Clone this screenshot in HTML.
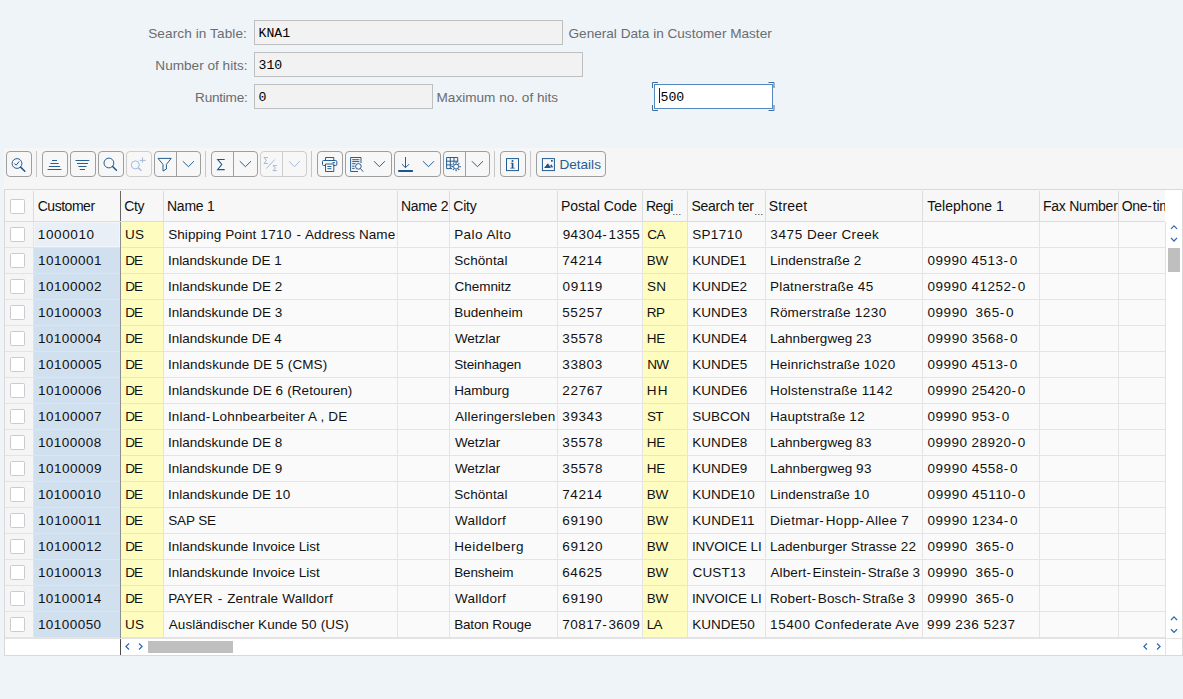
<!DOCTYPE html>
<html lang="en">
<head>
<meta charset="utf-8">
<title>Table Search</title>
<style>
html,body{margin:0;padding:0}
body{width:1183px;height:699px;overflow:hidden;background:#eff4f9;position:relative;font-family:"Liberation Sans",Arial,sans-serif;color:#1a1a1a}
.abs{position:absolute}
.lbl{position:absolute;font-size:13.6px;color:#6a6d70;white-space:nowrap;line-height:16px}
.lbl.r{text-align:right;width:200px}
.inp{position:absolute;box-sizing:border-box;border:1px solid #bfbfbf;background:#f2f2f2;height:25px;font-family:"Liberation Mono",monospace;font-size:13.2px;line-height:25px;padding-left:3.5px;color:#000;white-space:nowrap}
.inp.act{background:#fff;border-color:#5288bd}
.tb{position:absolute;left:4px;top:148px;width:1179px;height:42px;background:#f6f6f6}
.btn{position:absolute;top:151px;height:26px;box-sizing:border-box;border:1px solid #9e9e9e;border-radius:4px;background:#f7f7f7}
.btn.dis{border-color:#cdcdcd}
.btn svg{position:absolute;left:0;top:0}
.sep{position:absolute;top:151px;width:1px;height:26px;background:#c6c6c6}
.tbl{position:absolute;left:4px;top:189px;width:1179px;height:467px;box-sizing:border-box;border:1px solid #d9d9d9;background:#fff}
.hrow{position:absolute;left:0;top:190px;height:31px;width:1183px}
.hc{position:absolute;top:0;height:31px;background:#f7f7f7;border-right:1px solid #dcdcdc;font-size:14px;line-height:31px;white-space:nowrap;overflow:hidden;color:#111}
.hc .ht{position:absolute;left:3.5px;top:0.5px}
.hc b{font-weight:normal;padding:0 1.2px 0 0}
.hc.c-one{border-right:0;width:46px !important}
.hc .ell{position:absolute;top:17px;font-size:9px;line-height:10px;letter-spacing:0.5px}
.row{position:absolute;left:0;height:25px;width:1183px}
.c{position:absolute;top:0;height:25px;background:#fafafa;border-right:1px solid #e4e4e4;border-bottom:1px solid #e4e4e4;font-size:13.5px;line-height:25px;white-space:nowrap;overflow:hidden;color:#111}
.c span{position:absolute;left:4.5px;top:0;--ls:0px;letter-spacing:var(--ls)}
.c i{font-style:normal;letter-spacing:calc(var(--ls) + .3px)}
.c b{font-weight:normal;padding:0 1.6px 0 0}
.c b.s{padding:0 .8px}
.c.chk{background:#f5f5f5}
.cb{position:absolute;box-sizing:border-box;width:15px;height:15px;border:1px solid #cdc9d2;border-radius:1.5px;background:#fff}
.c.c-cust{background:#d1e0ef}
.c.c-cust.first{background:#e9eff7;box-shadow:inset 0 0 0 1px #f3f5f8}
.c.c-cty,.c.c-reg{background:#fffcc0}
</style>
</head>
<body>
<div class="lbl r" style="left:47px;top:26px;letter-spacing:.1px">Search in Table:</div>
<div class="inp" style="left:254px;top:20px;width:309px">KNA1</div>
<div class="lbl" style="left:568.5px;top:26px">General Data in Customer Master</div>
<div class="lbl r" style="left:47.5px;top:58px">Number of hits:</div>
<div class="inp" style="left:254px;top:52px;width:329px">310</div>
<div class="lbl r" style="left:47.5px;top:90px;letter-spacing:-.25px">Runtime:</div>
<div class="inp" style="left:254px;top:84px;width:179px">0</div>
<div class="lbl" style="left:436.5px;top:90px">Maximum no. of hits</div>
<div class="inp act" style="left:653.5px;top:84px;width:119.5px;padding-left:6px">500</div>
<div class="abs" style="left:659px;top:88px;width:1px;height:15px;background:#222"></div>
<svg class="abs" style="left:651px;top:81px" width="125" height="31" viewBox="0 0 125 31">
<path d="M1.5,7 V1.5 H7 M117.5,1.5 H123 V7 M123,24 V29.5 H117.5 M7,29.5 H1.5 V24" fill="none" stroke="#3f6f9f" stroke-width="1"/>
</svg>
<div class="tb"></div>
<!-- 1 detail -->
<div class="btn" style="left:6px;width:26px"><svg width="26" height="26" viewBox="0 0 26 26" style="left:-1px;top:-1px"><g fill="none" stroke="#1b558e"><circle cx="11" cy="12.5" r="4.9" stroke-width="0.95"/><path d="M8.3,12.4 L10.1,14.2 L13.3,10.4" stroke-width="1"/><path d="M14.6,16.1 L18.8,20.3" stroke-width="1.5" stroke-linecap="round"/></g></svg></div>
<div class="sep" style="left:36px"></div>
<!-- 2 sort asc -->
<div class="btn" style="left:42px;width:26px"><svg width="26" height="26" viewBox="0 0 26 26" style="left:-1px;top:-1px"><g stroke="#1b558e" stroke-width="0.95"><path d="M10,9.5 H15 M8.4,12.5 H16.6 M6.9,15.5 H18.1 M5.6,18.5 H19.4"/></g></svg></div>
<!-- 3 sort desc -->
<div class="btn" style="left:70px;width:26px"><svg width="26" height="26" viewBox="0 0 26 26" style="left:-1px;top:-1px"><g stroke="#1b558e" stroke-width="0.95"><path d="M5.5,9.5 H19.3 M7.1,12.5 H18 M8.3,15.5 H16.6 M9.8,18.5 H15"/></g></svg></div>
<!-- 4 find -->
<div class="btn" style="left:98px;width:26px"><svg width="26" height="26" viewBox="0 0 26 26" style="left:-1px;top:-1px"><g fill="none" stroke="#1b558e"><circle cx="10.9" cy="12" r="4.9" stroke-width="0.95"/><path d="M14.6,15.5 L18.4,19.3" stroke-width="1.5" stroke-linecap="round"/></g></svg></div>
<!-- 5 find next disabled -->
<div class="btn dis" style="left:126px;width:26px"><svg width="26" height="26" viewBox="0 0 26 26" style="left:-1px;top:-1px"><g fill="none" stroke="#a0bbdc"><circle cx="9.3" cy="13.9" r="4" stroke-width="1"/><path d="M12.2,16.8 L15.5,19.7" stroke-width="1.3"/><path d="M16.5,6.3 V11.7 M13.6,9.4 H19.6" stroke-width="1"/></g></svg></div>
<!-- 6 filter split -->
<div class="btn" style="left:154px;width:47px"><svg width="47" height="26" viewBox="0 0 47 26" style="left:-1px;top:-1px"><path d="M22.5,0 V26" stroke="#9e9e9e" stroke-width="1"/><g fill="none" stroke="#1b558e"><path d="M4,7.4 H17.2 L12.4,13.4 V18 L9,20 V13.4 Z" stroke-width="0.95" stroke-linejoin="round"/><path d="M28.8,10.2 L34.4,15.7 L40,10.2" stroke-width="0.95"/></g></svg></div>
<div class="sep" style="left:205px"></div>
<!-- 7 sum split -->
<div class="btn" style="left:211px;width:47px"><svg width="47" height="26" viewBox="0 0 47 26" style="left:-1px;top:-1px"><path d="M22.5,0 V26" stroke="#9e9e9e" stroke-width="1"/><g fill="none" stroke="#1b558e"><path d="M13.7,8.4 H6.6 L10.8,13.5 L6.6,18.6 H13.7" stroke-width="1.05"/><path d="M28.8,10.2 L34.4,15.7 L40,10.2" stroke-width="0.95"/></g></svg></div>
<!-- 8 subtotal disabled -->
<div class="btn dis" style="left:260px;width:47px"><svg width="47" height="26" viewBox="0 0 47 26" style="left:-1px;top:-1px"><path d="M22.5,0 V26" stroke="#cdcdcd" stroke-width="1"/><g fill="none" stroke="#a0bbdc" stroke-width="1"><path d="M7.9,6.5 H4 L6.4,9.5 L4,12.5 H7.9"/><path d="M14.7,8.6 L6.3,17.6"/><path d="M16.9,14.6 H13 L15.4,17.1 L13,19.6 H16.9"/><path d="M29,10.2 L34.4,15.7 L39.8,10.2"/></g></svg></div>
<div class="sep" style="left:311px"></div>
<!-- 9 print -->
<div class="btn" style="left:317px;width:26px"><svg width="26" height="26" viewBox="0 0 26 26" style="left:-1px;top:-1px"><g fill="none" stroke="#1b558e" stroke-width="0.95"><path d="M8.5,9.5 V6.5 H16.8 V9.5"/><path d="M8.5,14.5 H6.6 Q5.5,14.5 5.5,13.4 V10.6 Q5.5,9.5 6.6,9.5 H18.7 Q19.8,9.5 19.8,10.6 V13.4 Q19.8,14.5 18.7,14.5 H16.8"/><path d="M8.5,13 H16.8 V20.5 H8.5 Z"/><path d="M10.4,15.5 H14.4 M10.4,17.7 H14.4 M15.5,11.6 H17.9"/></g></svg></div>
<!-- 10 views -->
<div class="btn" style="left:345px;width:47px"><svg width="47" height="26" viewBox="0 0 47 26" style="left:-1px;top:-1px"><g fill="none" stroke="#1b558e" stroke-width="0.95"><path d="M13,20.5 H5.6 V6.5 H16 V12"/><path d="M7.2,8.7 H14.4 M7.2,10.6 H14.4 M7.2,12.7 H10.5 M7.2,15.2 H9.6 M7.2,17.4 H9.6"/><circle cx="13.4" cy="15.4" r="2.8"/><path d="M15.5,17.6 L18.2,20.7"/><path d="M29,10.2 L34.4,15.7 L39.9,10.2"/></g></svg></div>
<!-- 11 export -->
<div class="btn" style="left:394px;width:47px"><svg width="47" height="26" viewBox="0 0 47 26" style="left:-1px;top:-1px"><g fill="none" stroke="#1b558e" stroke-width="0.95"><path d="M11.5,6 V16.7 M7.9,13.1 L11.5,16.7 L15.1,13.1"/><path d="M4.2,20 H18.9" stroke-width="2"/><path d="M28.9,10.2 L34.5,15.7 L40,10.2"/></g></svg></div>
<!-- 12 layout split -->
<div class="btn" style="left:443px;width:47px"><svg width="47" height="26" viewBox="0 0 47 26" style="left:-1px;top:-1px"><path d="M22.5,0 V26" stroke="#9e9e9e" stroke-width="1"/><g fill="none" stroke="#1b558e" stroke-width="0.95"><path d="M9,17.6 H3.6 V6.5 H14.7 V11.5 M3.6,10.2 H14.7 M3.6,13.9 H9.5 M7.3,6.5 V17.6 M11,6.5 V11.8"/><circle cx="13.1" cy="15.6" r="2.5"/><path d="M13.1,11 V12.4 M13.1,18.8 V20.2 M8.5,15.6 H9.9 M16.3,15.6 H17.7 M9.9,12.4 L10.9,13.4 M15.3,17.8 L16.3,18.8 M16.3,12.4 L15.3,13.4 M10.9,17.8 L9.9,18.8" stroke-width="1.15"/><path d="M28.9,10.2 L34.4,15.7 L40,10.2"/></g></svg></div>
<div class="sep" style="left:494px"></div>
<!-- 13 info -->
<div class="btn" style="left:500px;width:26px"><svg width="26" height="26" viewBox="0 0 26 26" style="left:-1px;top:-1px"><rect x="6.5" y="7.6" width="12" height="12" fill="none" stroke="#1b558e" stroke-width="0.95"/><g fill="#1b558e"><circle cx="12.5" cy="9.9" r="1"/><path d="M10.7,11.7 H13.4 V16.7 H14.7 V17.6 H10.3 V16.7 H11.7 V12.6 H10.7 Z"/></g></svg></div>
<div class="sep" style="left:530px"></div>
<!-- 14 details -->
<div class="btn" style="left:536px;width:70px"><svg width="70" height="26" viewBox="0 0 70 26" style="left:-1px;top:-1px"><rect x="6.4" y="7.6" width="12" height="12" fill="none" stroke="#1b558e" stroke-width="0.95"/><g fill="#1b558e"><path d="M8,17 L11.9,12.2 L15,17 Z"/><path d="M14,15 L15.3,13.2 L17.2,16.2 L15.6,16.6 Z"/><rect x="15" y="9" width="1.7" height="1.7"/></g><text x="23.4" y="17.7" font-family="Liberation Sans, Arial, sans-serif" font-size="13.6" fill="#295c90">Details</text></svg></div>
<div class="tbl"></div>
<div class="hrow">
<div class="hc hchk" style="left:5px;width:28px"><span class="cb" style="left:5px;top:9px"></span></div>
<div class="hc c-cust" style="left:34px;width:86px"><span class="ht" style="left:3.67px;letter-spacing:-0.461px">Customer</span></div>
<div class="hc c-cty" style="left:121px;width:42px"><span class="ht" style="left:3.13px;letter-spacing:-0.298px">Cty</span></div>
<div class="hc c-n1" style="left:164px;width:233px"><span class="ht" style="left:2.97px;letter-spacing:-0.220px">Name 1</span></div>
<div class="hc c-n2" style="left:398px;width:51px"><span class="ht" style="left:2.97px;letter-spacing:-0.310px">Name 2</span></div>
<div class="hc c-city" style="left:450px;width:107px"><span class="ht" style="left:3.33px;letter-spacing:-0.271px">City</span></div>
<div class="hc c-pc" style="left:558px;width:84px"><span class="ht" style="left:2.97px;letter-spacing:-0.011px">Postal Code</span></div>
<div class="hc c-reg" style="left:643px;width:44px"><span class="ht" style="left:2.97px;letter-spacing:-0.477px">Regi</span><span class="ell" style="left:29.6px">...</span></div>
<div class="hc c-st" style="left:688px;width:77px"><span class="ht" style="left:3.38px;letter-spacing:-0.229px">Search ter</span><span class="ell" style="left:66.5px">...</span></div>
<div class="hc c-str" style="left:766px;width:156px"><span class="ht" style="left:2.82px;letter-spacing:0.198px">Street</span></div>
<div class="hc c-tel" style="left:923px;width:116px"><span class="ht" style="left:4.17px;letter-spacing:0.046px">Telephone 1</span></div>
<div class="hc c-fax" style="left:1040px;width:78px"><span class="ht" style="left:2.95px;letter-spacing:-0.236px">Fax Number</span></div>
<div class="hc c-one" style="left:1119px;width:46px"><span class="ht" style="left:2.7px;letter-spacing:-0.3px">One<b>-</b>tim</span></div>
</div>
<div class="row" style="top:222px">
<div class="c chk" style="left:5px;width:28px"><span class="cb" style="left:5px;top:5px"></span></div>
<div class="c c-cust first" style="left:34px;width:86px"><span style="left:3.85px;--ls:0.318px"><i>1000010</i></span></div>
<div class="c c-cty" style="left:121px;width:42px"><span style="left:4.03px;--ls:0.211px">US</span></div>
<div class="c c-n1" style="left:164px;width:233px"><span style="left:4.16px;--ls:0.086px">Shipping Point <i>1710</i> <b class="s">-</b> Address Name</span></div>
<div class="c c-n2" style="left:398px;width:51px"><span></span></div>
<div class="c c-city" style="left:450px;width:107px"><span style="left:4.17px;--ls:0.445px">Palo Alto</span></div>
<div class="c c-pc" style="left:558px;width:84px"><span style="left:4.69px;--ls:0.120px"><i>94304</i><b>-</b><i>1355</i></span></div>
<div class="c c-reg" style="left:643px;width:44px"><span style="left:4.18px;--ls:-0.314px">CA</span></div>
<div class="c c-st" style="left:688px;width:77px"><span style="left:4.16px;--ls:0.232px">SP<i>1710</i></span></div>
<div class="c c-str" style="left:766px;width:156px"><span style="left:4.32px;--ls:0.320px"><i>3475</i> Deer Creek</span></div>
<div class="c c-tel" style="left:923px;width:116px"><span></span></div>
<div class="c c-fax" style="left:1040px;width:78px"><span></span></div>
<div class="c c-one" style="left:1119px;width:46px"><span></span></div>
</div>
<div class="row" style="top:248px">
<div class="c chk" style="left:5px;width:28px"><span class="cb" style="left:5px;top:5px"></span></div>
<div class="c c-cust" style="left:34px;width:86px"><span style="left:3.88px;--ls:0.194px"><i>10100001</i></span></div>
<div class="c c-cty" style="left:121px;width:42px"><span style="left:4.26px;--ls:-1.116px">DE</span></div>
<div class="c c-n1" style="left:164px;width:233px"><span style="left:3.92px;--ls:-0.019px">Inlandskunde DE <i>1</i></span></div>
<div class="c c-n2" style="left:398px;width:51px"><span></span></div>
<div class="c c-city" style="left:450px;width:107px"><span style="left:4.16px;--ls:0.110px">Schöntal</span></div>
<div class="c c-pc" style="left:558px;width:84px"><span style="left:4.32px;--ls:0.247px"><i>74214</i></span></div>
<div class="c c-reg" style="left:643px;width:44px"><span style="left:3.86px;--ls:-0.385px">BW</span></div>
<div class="c c-st" style="left:688px;width:77px"><span style="left:4.14px;--ls:-0.076px">KUNDE<i>1</i></span></div>
<div class="c c-str" style="left:766px;width:156px"><span style="left:3.96px;--ls:0.094px">Lindenstraße <i>2</i></span></div>
<div class="c c-tel" style="left:923px;width:116px"><span style="left:4.58px;--ls:0.178px"><i>09990</i> <i>4513</i><b>-</b><i>0</i></span></div>
<div class="c c-fax" style="left:1040px;width:78px"><span></span></div>
<div class="c c-one" style="left:1119px;width:46px"><span></span></div>
</div>
<div class="row" style="top:274px">
<div class="c chk" style="left:5px;width:28px"><span class="cb" style="left:5px;top:5px"></span></div>
<div class="c c-cust" style="left:34px;width:86px"><span style="left:3.88px;--ls:0.207px"><i>10100002</i></span></div>
<div class="c c-cty" style="left:121px;width:42px"><span style="left:4.26px;--ls:-1.116px">DE</span></div>
<div class="c c-n1" style="left:164px;width:233px"><span style="left:3.92px;--ls:0.013px">Inlandskunde DE <i>2</i></span></div>
<div class="c c-n2" style="left:398px;width:51px"><span></span></div>
<div class="c c-city" style="left:450px;width:107px"><span style="left:4.55px;--ls:-0.039px">Chemnitz</span></div>
<div class="c c-pc" style="left:558px;width:84px"><span style="left:4.56px;--ls:0.507px"><i>09119</i></span></div>
<div class="c c-reg" style="left:643px;width:44px"><span style="left:3.96px;--ls:0.369px">SN</span></div>
<div class="c c-st" style="left:688px;width:77px"><span style="left:4.14px;--ls:0.018px">KUNDE<i>2</i></span></div>
<div class="c c-str" style="left:766px;width:156px"><span style="left:3.96px;--ls:0.210px">Platnerstraße <i>45</i></span></div>
<div class="c c-tel" style="left:923px;width:116px"><span style="left:4.58px;--ls:0.187px"><i>09990</i> <i>41252</i><b>-</b><i>0</i></span></div>
<div class="c c-fax" style="left:1040px;width:78px"><span></span></div>
<div class="c c-one" style="left:1119px;width:46px"><span></span></div>
</div>
<div class="row" style="top:300px">
<div class="c chk" style="left:5px;width:28px"><span class="cb" style="left:5px;top:5px"></span></div>
<div class="c c-cust" style="left:34px;width:86px"><span style="left:3.88px;--ls:0.206px"><i>10100003</i></span></div>
<div class="c c-cty" style="left:121px;width:42px"><span style="left:4.26px;--ls:-1.116px">DE</span></div>
<div class="c c-n1" style="left:164px;width:233px"><span style="left:3.92px;--ls:0.020px">Inlandskunde DE <i>3</i></span></div>
<div class="c c-n2" style="left:398px;width:51px"><span></span></div>
<div class="c c-city" style="left:450px;width:107px"><span style="left:4.17px;--ls:0.029px">Budenheim</span></div>
<div class="c c-pc" style="left:558px;width:84px"><span style="left:4.16px;--ls:0.400px"><i>55257</i></span></div>
<div class="c c-reg" style="left:643px;width:44px"><span style="left:3.86px;--ls:-0.604px">RP</span></div>
<div class="c c-st" style="left:688px;width:77px"><span style="left:4.14px;--ls:0.076px">KUNDE<i>3</i></span></div>
<div class="c c-str" style="left:766px;width:156px"><span style="left:3.96px;--ls:0.185px">Römerstraße <i>1230</i></span></div>
<div class="c c-tel" style="left:923px;width:116px"><span style="left:4.58px;--ls:0.209px"><i>09990</i>  <i>365</i><b>-</b><i>0</i></span></div>
<div class="c c-fax" style="left:1040px;width:78px"><span></span></div>
<div class="c c-one" style="left:1119px;width:46px"><span></span></div>
</div>
<div class="row" style="top:326px">
<div class="c chk" style="left:5px;width:28px"><span class="cb" style="left:5px;top:5px"></span></div>
<div class="c c-cust" style="left:34px;width:86px"><span style="left:3.88px;--ls:0.169px"><i>10100004</i></span></div>
<div class="c c-cty" style="left:121px;width:42px"><span style="left:4.26px;--ls:-1.116px">DE</span></div>
<div class="c c-n1" style="left:164px;width:233px"><span style="left:3.92px;--ls:-0.008px">Inlandskunde DE <i>4</i></span></div>
<div class="c c-n2" style="left:398px;width:51px"><span></span></div>
<div class="c c-city" style="left:450px;width:107px"><span style="left:4.93px;--ls:-0.047px">Wetzlar</span></div>
<div class="c c-pc" style="left:558px;width:84px"><span style="left:4.32px;--ls:0.348px"><i>35578</i></span></div>
<div class="c c-reg" style="left:643px;width:44px"><span style="left:3.86px;--ls:-0.428px">HE</span></div>
<div class="c c-st" style="left:688px;width:77px"><span style="left:4.14px;--ls:0.016px">KUNDE<i>4</i></span></div>
<div class="c c-str" style="left:766px;width:156px"><span style="left:3.96px;--ls:0.047px">Lahnbergweg <i>23</i></span></div>
<div class="c c-tel" style="left:923px;width:116px"><span style="left:4.58px;--ls:0.208px"><i>09990</i> <i>3568</i><b>-</b><i>0</i></span></div>
<div class="c c-fax" style="left:1040px;width:78px"><span></span></div>
<div class="c c-one" style="left:1119px;width:46px"><span></span></div>
</div>
<div class="row" style="top:352px">
<div class="c chk" style="left:5px;width:28px"><span class="cb" style="left:5px;top:5px"></span></div>
<div class="c c-cust" style="left:34px;width:86px"><span style="left:3.88px;--ls:0.201px"><i>10100005</i></span></div>
<div class="c c-cty" style="left:121px;width:42px"><span style="left:4.26px;--ls:-1.116px">DE</span></div>
<div class="c c-n1" style="left:164px;width:233px"><span style="left:3.92px;--ls:0.099px">Inlandskunde DE <i>5</i> (CMS)</span></div>
<div class="c c-n2" style="left:398px;width:51px"><span></span></div>
<div class="c c-city" style="left:450px;width:107px"><span style="left:4.16px;--ls:-0.121px">Steinhagen</span></div>
<div class="c c-pc" style="left:558px;width:84px"><span style="left:4.32px;--ls:0.271px"><i>33803</i></span></div>
<div class="c c-reg" style="left:643px;width:44px"><span style="left:4.13px;--ls:-0.507px">NW</span></div>
<div class="c c-st" style="left:688px;width:77px"><span style="left:4.14px;--ls:0.061px">KUNDE<i>5</i></span></div>
<div class="c c-str" style="left:766px;width:156px"><span style="left:3.96px;--ls:0.154px">Heinrichstraße <i>1020</i></span></div>
<div class="c c-tel" style="left:923px;width:116px"><span style="left:4.58px;--ls:0.178px"><i>09990</i> <i>4513</i><b>-</b><i>0</i></span></div>
<div class="c c-fax" style="left:1040px;width:78px"><span></span></div>
<div class="c c-one" style="left:1119px;width:46px"><span></span></div>
</div>
<div class="row" style="top:378px">
<div class="c chk" style="left:5px;width:28px"><span class="cb" style="left:5px;top:5px"></span></div>
<div class="c c-cust" style="left:34px;width:86px"><span style="left:3.88px;--ls:0.214px"><i>10100006</i></span></div>
<div class="c c-cty" style="left:121px;width:42px"><span style="left:4.26px;--ls:-1.116px">DE</span></div>
<div class="c c-n1" style="left:164px;width:233px"><span style="left:3.92px;--ls:0.065px">Inlandskunde DE <i>6</i> (Retouren)</span></div>
<div class="c c-n2" style="left:398px;width:51px"><span></span></div>
<div class="c c-city" style="left:450px;width:107px"><span style="left:4.17px;--ls:-0.078px">Hamburg</span></div>
<div class="c c-pc" style="left:558px;width:84px"><span style="left:4.32px;--ls:0.358px"><i>22767</i></span></div>
<div class="c c-reg" style="left:643px;width:44px"><span style="left:3.86px;--ls:1.037px">HH</span></div>
<div class="c c-st" style="left:688px;width:77px"><span style="left:4.14px;--ls:0.090px">KUNDE<i>6</i></span></div>
<div class="c c-str" style="left:766px;width:156px"><span style="left:3.96px;--ls:0.279px">Holstenstraße <i>1142</i></span></div>
<div class="c c-tel" style="left:923px;width:116px"><span style="left:4.58px;--ls:0.187px"><i>09990</i> <i>25420</i><b>-</b><i>0</i></span></div>
<div class="c c-fax" style="left:1040px;width:78px"><span></span></div>
<div class="c c-one" style="left:1119px;width:46px"><span></span></div>
</div>
<div class="row" style="top:404px">
<div class="c chk" style="left:5px;width:28px"><span class="cb" style="left:5px;top:5px"></span></div>
<div class="c c-cust" style="left:34px;width:86px"><span style="left:3.88px;--ls:0.207px"><i>10100007</i></span></div>
<div class="c c-cty" style="left:121px;width:42px"><span style="left:4.26px;--ls:-1.116px">DE</span></div>
<div class="c c-n1" style="left:164px;width:233px"><span style="left:3.92px;--ls:0.158px">Inland<b>-</b>Lohnbearbeiter A , DE</span></div>
<div class="c c-n2" style="left:398px;width:51px"><span></span></div>
<div class="c c-city" style="left:450px;width:107px"><span style="left:5.03px;--ls:0.226px">Alleringersleben</span></div>
<div class="c c-pc" style="left:558px;width:84px"><span style="left:4.32px;--ls:0.271px"><i>39343</i></span></div>
<div class="c c-reg" style="left:643px;width:44px"><span style="left:3.95px;--ls:-0.592px">ST</span></div>
<div class="c c-st" style="left:688px;width:77px"><span style="left:4.16px;--ls:0.025px">SUBCON</span></div>
<div class="c c-str" style="left:766px;width:156px"><span style="left:3.96px;--ls:0.114px">Hauptstraße <i>12</i></span></div>
<div class="c c-tel" style="left:923px;width:116px"><span style="left:4.58px;--ls:0.186px"><i>09990</i> <i>953</i><b>-</b><i>0</i></span></div>
<div class="c c-fax" style="left:1040px;width:78px"><span></span></div>
<div class="c c-one" style="left:1119px;width:46px"><span></span></div>
</div>
<div class="row" style="top:430px">
<div class="c chk" style="left:5px;width:28px"><span class="cb" style="left:5px;top:5px"></span></div>
<div class="c c-cust" style="left:34px;width:86px"><span style="left:3.88px;--ls:0.158px"><i>10100008</i></span></div>
<div class="c c-cty" style="left:121px;width:42px"><span style="left:4.26px;--ls:-1.116px">DE</span></div>
<div class="c c-n1" style="left:164px;width:233px"><span style="left:3.92px;--ls:0.015px">Inlandskunde DE <i>8</i></span></div>
<div class="c c-n2" style="left:398px;width:51px"><span></span></div>
<div class="c c-city" style="left:450px;width:107px"><span style="left:4.93px;--ls:-0.047px">Wetzlar</span></div>
<div class="c c-pc" style="left:558px;width:84px"><span style="left:4.32px;--ls:0.348px"><i>35578</i></span></div>
<div class="c c-reg" style="left:643px;width:44px"><span style="left:3.86px;--ls:-0.428px">HE</span></div>
<div class="c c-st" style="left:688px;width:77px"><span style="left:4.14px;--ls:0.091px">KUNDE<i>8</i></span></div>
<div class="c c-str" style="left:766px;width:156px"><span style="left:3.96px;--ls:0.047px">Lahnbergweg <i>83</i></span></div>
<div class="c c-tel" style="left:923px;width:116px"><span style="left:4.58px;--ls:0.187px"><i>09990</i> <i>28920</i><b>-</b><i>0</i></span></div>
<div class="c c-fax" style="left:1040px;width:78px"><span></span></div>
<div class="c c-one" style="left:1119px;width:46px"><span></span></div>
</div>
<div class="row" style="top:456px">
<div class="c chk" style="left:5px;width:28px"><span class="cb" style="left:5px;top:5px"></span></div>
<div class="c c-cust" style="left:34px;width:86px"><span style="left:3.88px;--ls:0.213px"><i>10100009</i></span></div>
<div class="c c-cty" style="left:121px;width:42px"><span style="left:4.26px;--ls:-1.116px">DE</span></div>
<div class="c c-n1" style="left:164px;width:233px"><span style="left:3.92px;--ls:0.021px">Inlandskunde DE <i>9</i></span></div>
<div class="c c-n2" style="left:398px;width:51px"><span></span></div>
<div class="c c-city" style="left:450px;width:107px"><span style="left:4.93px;--ls:-0.047px">Wetzlar</span></div>
<div class="c c-pc" style="left:558px;width:84px"><span style="left:4.32px;--ls:0.348px"><i>35578</i></span></div>
<div class="c c-reg" style="left:643px;width:44px"><span style="left:3.86px;--ls:-0.428px">HE</span></div>
<div class="c c-st" style="left:688px;width:77px"><span style="left:4.14px;--ls:0.069px">KUNDE<i>9</i></span></div>
<div class="c c-str" style="left:766px;width:156px"><span style="left:3.96px;--ls:0.047px">Lahnbergweg <i>93</i></span></div>
<div class="c c-tel" style="left:923px;width:116px"><span style="left:4.58px;--ls:0.208px"><i>09990</i> <i>4558</i><b>-</b><i>0</i></span></div>
<div class="c c-fax" style="left:1040px;width:78px"><span></span></div>
<div class="c c-one" style="left:1119px;width:46px"><span></span></div>
</div>
<div class="row" style="top:482px">
<div class="c chk" style="left:5px;width:28px"><span class="cb" style="left:5px;top:5px"></span></div>
<div class="c c-cust" style="left:34px;width:86px"><span style="left:3.88px;--ls:0.154px"><i>10100010</i></span></div>
<div class="c c-cty" style="left:121px;width:42px"><span style="left:4.26px;--ls:-1.116px">DE</span></div>
<div class="c c-n1" style="left:164px;width:233px"><span style="left:3.92px;--ls:0.024px">Inlandskunde DE <i>10</i></span></div>
<div class="c c-n2" style="left:398px;width:51px"><span></span></div>
<div class="c c-city" style="left:450px;width:107px"><span style="left:4.16px;--ls:0.110px">Schöntal</span></div>
<div class="c c-pc" style="left:558px;width:84px"><span style="left:4.32px;--ls:0.247px"><i>74214</i></span></div>
<div class="c c-reg" style="left:643px;width:44px"><span style="left:3.86px;--ls:-0.385px">BW</span></div>
<div class="c c-st" style="left:688px;width:77px"><span style="left:4.14px;--ls:0.029px">KUNDE<i>10</i></span></div>
<div class="c c-str" style="left:766px;width:156px"><span style="left:3.96px;--ls:0.099px">Lindenstraße <i>10</i></span></div>
<div class="c c-tel" style="left:923px;width:116px"><span style="left:4.58px;--ls:0.270px"><i>09990</i> <i>45110</i><b>-</b><i>0</i></span></div>
<div class="c c-fax" style="left:1040px;width:78px"><span></span></div>
<div class="c c-one" style="left:1119px;width:46px"><span></span></div>
</div>
<div class="row" style="top:508px">
<div class="c chk" style="left:5px;width:28px"><span class="cb" style="left:5px;top:5px"></span></div>
<div class="c c-cust" style="left:34px;width:86px"><span style="left:3.88px;--ls:0.337px"><i>10100011</i></span></div>
<div class="c c-cty" style="left:121px;width:42px"><span style="left:4.26px;--ls:-1.116px">DE</span></div>
<div class="c c-n1" style="left:164px;width:233px"><span style="left:4.16px;--ls:-0.113px">SAP SE</span></div>
<div class="c c-n2" style="left:398px;width:51px"><span></span></div>
<div class="c c-city" style="left:450px;width:107px"><span style="left:4.93px;--ls:0.242px">Walldorf</span></div>
<div class="c c-pc" style="left:558px;width:84px"><span style="left:4.29px;--ls:0.346px"><i>69190</i></span></div>
<div class="c c-reg" style="left:643px;width:44px"><span style="left:3.86px;--ls:-0.385px">BW</span></div>
<div class="c c-st" style="left:688px;width:77px"><span style="left:4.14px;--ls:0.151px">KUNDE<i>11</i></span></div>
<div class="c c-str" style="left:766px;width:156px"><span style="left:3.96px;--ls:0.306px">Dietmar<b>-</b>Hopp<b>-</b>Allee <i>7</i></span></div>
<div class="c c-tel" style="left:923px;width:116px"><span style="left:4.58px;--ls:0.208px"><i>09990</i> <i>1234</i><b>-</b><i>0</i></span></div>
<div class="c c-fax" style="left:1040px;width:78px"><span></span></div>
<div class="c c-one" style="left:1119px;width:46px"><span></span></div>
</div>
<div class="row" style="top:534px">
<div class="c chk" style="left:5px;width:28px"><span class="cb" style="left:5px;top:5px"></span></div>
<div class="c c-cust" style="left:34px;width:86px"><span style="left:3.88px;--ls:0.207px"><i>10100012</i></span></div>
<div class="c c-cty" style="left:121px;width:42px"><span style="left:4.26px;--ls:-1.116px">DE</span></div>
<div class="c c-n1" style="left:164px;width:233px"><span style="left:3.92px;--ls:0.014px">Inlandskunde Invoice List</span></div>
<div class="c c-n2" style="left:398px;width:51px"><span></span></div>
<div class="c c-city" style="left:450px;width:107px"><span style="left:4.17px;--ls:0.453px">Heidelberg</span></div>
<div class="c c-pc" style="left:558px;width:84px"><span style="left:4.29px;--ls:0.346px"><i>69120</i></span></div>
<div class="c c-reg" style="left:643px;width:44px"><span style="left:3.86px;--ls:-0.385px">BW</span></div>
<div class="c c-st" style="left:688px;width:77px"><span style="left:3.92px;--ls:-0.087px">INVOICE LI</span></div>
<div class="c c-str" style="left:766px;width:156px"><span style="left:3.96px;--ls:0.047px">Ladenburger Strasse <i>22</i></span></div>
<div class="c c-tel" style="left:923px;width:116px"><span style="left:4.58px;--ls:0.209px"><i>09990</i>  <i>365</i><b>-</b><i>0</i></span></div>
<div class="c c-fax" style="left:1040px;width:78px"><span></span></div>
<div class="c c-one" style="left:1119px;width:46px"><span></span></div>
</div>
<div class="row" style="top:560px">
<div class="c chk" style="left:5px;width:28px"><span class="cb" style="left:5px;top:5px"></span></div>
<div class="c c-cust" style="left:34px;width:86px"><span style="left:3.88px;--ls:0.206px"><i>10100013</i></span></div>
<div class="c c-cty" style="left:121px;width:42px"><span style="left:4.26px;--ls:-1.116px">DE</span></div>
<div class="c c-n1" style="left:164px;width:233px"><span style="left:3.92px;--ls:0.014px">Inlandskunde Invoice List</span></div>
<div class="c c-n2" style="left:398px;width:51px"><span></span></div>
<div class="c c-city" style="left:450px;width:107px"><span style="left:4.17px;--ls:-0.101px">Bensheim</span></div>
<div class="c c-pc" style="left:558px;width:84px"><span style="left:4.29px;--ls:0.271px"><i>64625</i></span></div>
<div class="c c-reg" style="left:643px;width:44px"><span style="left:3.86px;--ls:-0.385px">BW</span></div>
<div class="c c-st" style="left:688px;width:77px"><span style="left:4.55px;--ls:0.154px">CUST<i>13</i></span></div>
<div class="c c-str" style="left:766px;width:156px"><span style="left:4.49px;--ls:0.102px">Albert<b>-</b>Einstein<b>-</b>Straße <i>3</i></span></div>
<div class="c c-tel" style="left:923px;width:116px"><span style="left:4.58px;--ls:0.209px"><i>09990</i>  <i>365</i><b>-</b><i>0</i></span></div>
<div class="c c-fax" style="left:1040px;width:78px"><span></span></div>
<div class="c c-one" style="left:1119px;width:46px"><span></span></div>
</div>
<div class="row" style="top:586px">
<div class="c chk" style="left:5px;width:28px"><span class="cb" style="left:5px;top:5px"></span></div>
<div class="c c-cust" style="left:34px;width:86px"><span style="left:3.88px;--ls:0.169px"><i>10100014</i></span></div>
<div class="c c-cty" style="left:121px;width:42px"><span style="left:4.26px;--ls:-1.116px">DE</span></div>
<div class="c c-n1" style="left:164px;width:233px"><span style="left:4.17px;--ls:0.205px">PAYER <b class="s">-</b> Zentrale Walldorf</span></div>
<div class="c c-n2" style="left:398px;width:51px"><span></span></div>
<div class="c c-city" style="left:450px;width:107px"><span style="left:4.93px;--ls:0.242px">Walldorf</span></div>
<div class="c c-pc" style="left:558px;width:84px"><span style="left:4.29px;--ls:0.346px"><i>69190</i></span></div>
<div class="c c-reg" style="left:643px;width:44px"><span style="left:3.86px;--ls:-0.385px">BW</span></div>
<div class="c c-st" style="left:688px;width:77px"><span style="left:3.92px;--ls:-0.087px">INVOICE LI</span></div>
<div class="c c-str" style="left:766px;width:156px"><span style="left:3.96px;--ls:0.162px">Robert<b>-</b>Bosch<b>-</b>Straße <i>3</i></span></div>
<div class="c c-tel" style="left:923px;width:116px"><span style="left:4.58px;--ls:0.209px"><i>09990</i>  <i>365</i><b>-</b><i>0</i></span></div>
<div class="c c-fax" style="left:1040px;width:78px"><span></span></div>
<div class="c c-one" style="left:1119px;width:46px"><span></span></div>
</div>
<div class="row" style="top:612px">
<div class="c chk" style="left:5px;width:28px"><span class="cb" style="left:5px;top:5px"></span></div>
<div class="c c-cust" style="left:34px;width:86px"><span style="left:3.88px;--ls:0.154px"><i>10100050</i></span></div>
<div class="c c-cty" style="left:121px;width:42px"><span style="left:4.03px;--ls:0.211px">US</span></div>
<div class="c c-n1" style="left:164px;width:233px"><span style="left:4.77px;--ls:0.055px">Ausländischer Kunde <i>50</i> (US)</span></div>
<div class="c c-n2" style="left:398px;width:51px"><span></span></div>
<div class="c c-city" style="left:450px;width:107px"><span style="left:4.17px;--ls:-0.149px">Baton Rouge</span></div>
<div class="c c-pc" style="left:558px;width:84px"><span style="left:4.32px;--ls:0.154px"><i>70817</i><b>-</b><i>3609</i></span></div>
<div class="c c-reg" style="left:643px;width:44px"><span style="left:3.86px;--ls:-0.794px">LA</span></div>
<div class="c c-st" style="left:688px;width:77px"><span style="left:4.14px;--ls:0.029px">KUNDE<i>50</i></span></div>
<div class="c c-str" style="left:766px;width:156px"><span style="left:4.06px;--ls:0.288px"><i>15400</i> Confederate Ave</span></div>
<div class="c c-tel" style="left:923px;width:116px"><span style="left:4.12px;--ls:0.237px"><i>999</i> <i>236</i> <i>5237</i></span></div>
<div class="c c-fax" style="left:1040px;width:78px"><span></span></div>
<div class="c c-one" style="left:1119px;width:46px"><span></span></div>
</div><!-- fixed column separator -->
<div class="abs" style="left:120px;top:190px;width:1px;height:32px;background:#666"></div>
<div class="abs" style="left:120px;top:222px;width:1px;height:417px;background:#8e8e8e"></div>
<div class="abs" style="left:120px;top:639px;width:1px;height:16px;background:#4a4a4a"></div>
<!-- header/body separator -->
<div class="abs" style="left:5px;top:221px;width:1160px;height:1px;background:#dcdcdc"></div>
<!-- bottom of last row -->
<div class="abs" style="left:5px;top:638px;width:1177px;height:1px;background:#e2e2e2"></div>
<!-- vertical scrollbar -->
<div class="abs" style="left:1165px;top:222px;width:1px;height:433px;background:#e2e2e2"></div>
<div class="abs" style="left:1168px;top:248px;width:12px;height:24px;background:#bfbfbf"></div>
<svg class="abs" style="left:1166px;top:222px" width="16" height="24" viewBox="0 0 16 24"><path d="M4.95,6.9 L8,3.8 L11.05,6.9 M4.95,15.9 L8,19 L11.05,15.9" fill="none" stroke="#2c6bb0" stroke-width="1.25"/></svg>
<svg class="abs" style="left:1166px;top:613px" width="16" height="24" viewBox="0 0 16 24"><path d="M4.95,7 L8,3.9 L11.05,7 M4.95,16.3 L8,19.4 L11.05,16.3" fill="none" stroke="#2c6bb0" stroke-width="1.25"/></svg>
<!-- horizontal scrollbar -->
<div class="abs" style="left:148px;top:641px;width:85px;height:12px;background:#bfbfbf"></div>
<svg class="abs" style="left:122px;top:639px" width="24" height="16" viewBox="0 0 24 16"><path d="M7,4.5 L3.9,7.5 L7,10.5 M17,4.5 L20.1,7.5 L17,10.5" fill="none" stroke="#2c6bb0" stroke-width="1.2"/></svg>
<svg class="abs" style="left:1140px;top:639px" width="24" height="16" viewBox="0 0 24 16"><path d="M7,4.5 L3.9,7.5 L7,10.5 M17,4.5 L20.1,7.5 L17,10.5" fill="none" stroke="#2c6bb0" stroke-width="1.2"/></svg>
<!-- 1px gap above header separators -->
<div class="abs" style="left:5px;top:190px;width:1160px;height:1px;background:#f7f7f7"></div>
</body></html>
